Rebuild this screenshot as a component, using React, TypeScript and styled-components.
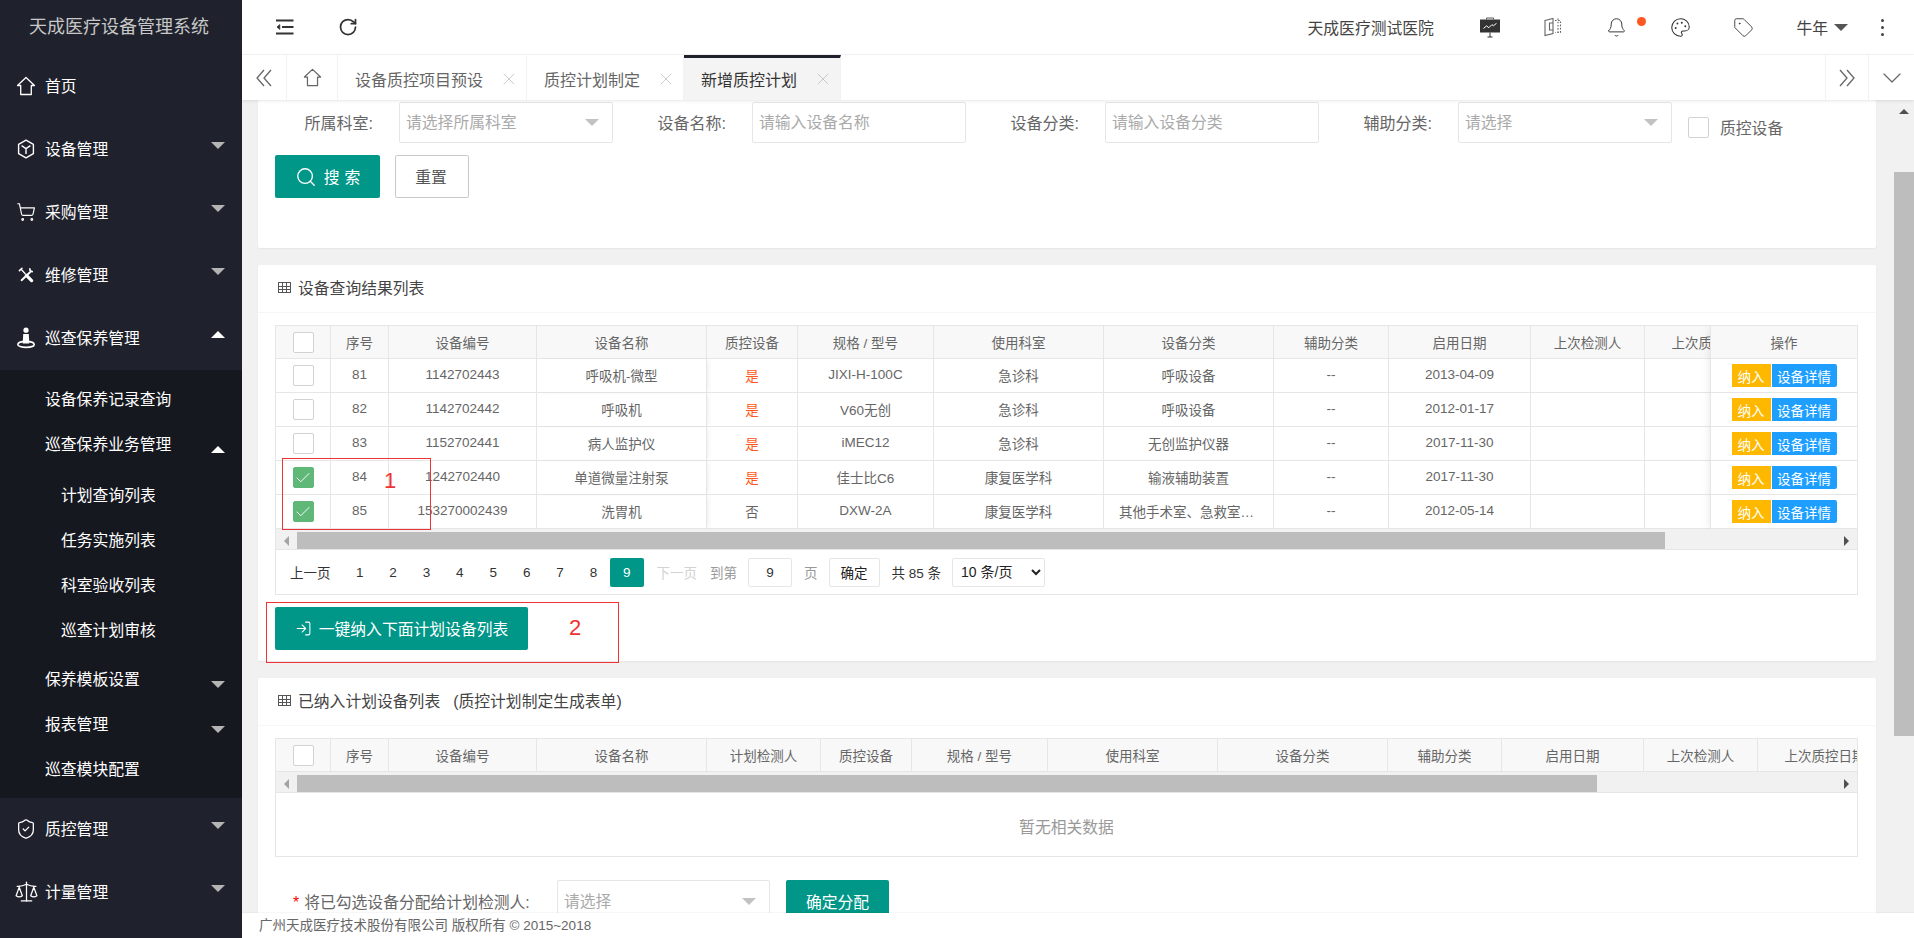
// Utils
import React from "react"
import styled, { createGlobalStyle } from "styled-components"
import {
	Bell,
	Check,
	ChevronDown,
	LogIn,
	Palette,
	RotateCw,
	Scale,
	Search,
	ShieldCheck,
	ShoppingCart,
	Tag,
	X,
} from "lucide-react"

const teal = "#009688"
const line = "#e6e6e6"

const HomeIcon = ({ size = 20 }: { size?: number }) => (
	<svg width={size} height={size} viewBox="0 0 20 20" fill="none" stroke="currentColor" strokeWidth="1.3">
		<path d="M1.5 9.5 10 1.5l8.5 8h-3.2v9H4.7v-9z" strokeLinejoin="round" />
	</svg>
)

const BoxIcon = () => (
	<svg width="20" height="20" viewBox="0 0 20 20" fill="none" stroke="currentColor" strokeWidth="1.4">
		<path d="M10 1.2 17.4 5.4v9.2L10 18.8 2.6 14.6V5.4z" strokeLinejoin="round" />
		<path d="M5.6 6.6 10 9.6l4.4-3M10 9.6v5.4" />
	</svg>
)

const ToolsIcon = () => (
	<svg width="16" height="16" viewBox="0 0 20 20" fill="none" stroke="currentColor" strokeLinecap="round">
		<path d="M4.5 3.5 9 8.5" strokeWidth="1.6" />
		<path d="M10.5 10.5 17 17" strokeWidth="4" />
		<path d="M15 6.5 4.5 16.5" strokeWidth="2.4" />
		<path d="M1.8 4.6 5 1.6" strokeWidth="2" />
		<path d="M14.8 2.4a3.4 3.4 0 0 0 3 3.4" strokeWidth="2" />
	</svg>
)

const PersonIcon = () => (
	<svg width="20" height="22" viewBox="0 0 20 22" fill="currentColor">
		<circle cx="10" cy="3.2" r="2.6" />
		<path d="M7.2 7h5.6l.5 9.4H6.7z" />
		<ellipse cx="10" cy="17.4" rx="8.2" ry="3" fill="none" stroke="currentColor" strokeWidth="1.6" />
	</svg>
)

const FoldIcon = () => (
	<svg width="18" height="16" viewBox="0 0 18 16" fill="none" stroke="#333" strokeWidth="1.8">
		<path d="M0 1.5h17.5M6 8h11.5M0 14.5h17.5" />
		<path d="M3.8 5.6 1 8l2.8 2.4z" fill="#333" strokeWidth="0.8" />
	</svg>
)

const BoardIcon = () => (
	<svg width="22" height="22" viewBox="0 0 22 22" fill="none">
		<rect x="1" y="3.5" width="20" height="13" fill="#333" />
		<path d="M7.5 3.5V2h7v1.5" stroke="#555" />
		<path d="M4.5 12.5l3-2.6 2.4 1.8 3-3 1.6 1 3-2.4" stroke="#fff" strokeWidth="1" />
		<path d="M11 16.5V21M8.5 21h5" stroke="#333" />
	</svg>
)

const BookIcon = () => (
	<svg width="18" height="20" viewBox="0 0 18 20" fill="none" stroke="#666" strokeWidth="1.1">
		<path d="M1 3.5 9 1.5v15l-8 2zM9 6h-3.5v7H9" />
		<path d="M11 3.5h5.5v12H11M14 1.5v16" strokeDasharray="1.6 1.6" />
	</svg>
)

const DoubleChevron = ({ right }: { right?: boolean }) => (
	<svg width="18" height="18" viewBox="0 0 18 18" fill="none" stroke="#666" strokeWidth="1.3">
		<path d={right ? "M2 1l7 8-7 8M9 1l7 8-7 8" : "M9 1 2 9l7 8M16 1 9 9l7 8"} />
	</svg>
)

interface RowData {
	no: number
	code: string
	name: string
	qc: boolean
	spec: string
	dept: string
	kind: string
	date: string
	checked: boolean
}

const rows: RowData[] = [
	{ no: 81, code: "1142702443", name: "呼吸机-微型", qc: true, spec: "JIXI-H-100C", dept: "急诊科", kind: "呼吸设备", date: "2013-04-09", checked: false },
	{ no: 82, code: "1142702442", name: "呼吸机", qc: true, spec: "V60无创", dept: "急诊科", kind: "呼吸设备", date: "2012-01-17", checked: false },
	{ no: 83, code: "1152702441", name: "病人监护仪", qc: true, spec: "iMEC12", dept: "急诊科", kind: "无创监护仪器", date: "2017-11-30", checked: false },
	{ no: 84, code: "1242702440", name: "单道微量注射泵", qc: true, spec: "佳士比C6", dept: "康复医学科", kind: "输液辅助装置", date: "2017-11-30", checked: true },
	{ no: 85, code: "153270002439", name: "洗胃机", qc: false, spec: "DXW-2A", dept: "康复医学科", kind: "其他手术室、急救室设备", date: "2012-05-14", checked: true },
]

const resultCols: [string, number][] = [
	["序号", 58],
	["设备编号", 148],
	["设备名称", 170],
	["质控设备", 91],
	["规格 / 型号", 136],
	["使用科室", 170],
	["设备分类", 170],
	["辅助分类", 115],
	["启用日期", 142],
	["上次检测人", 114],
	["上次质控日期", 135],
	["", 147],
]

const planCols: [string, number][] = [
	["序号", 58],
	["设备编号", 148],
	["设备名称", 170],
	["计划检测人", 114],
	["质控设备", 91],
	["规格 / 型号", 136],
	["使用科室", 170],
	["设备分类", 170],
	["辅助分类", 114],
	["启用日期", 142],
	["上次检测人", 114],
	["上次质控日期", 135],
]

const totalWidth = (cols: [string, number][]) =>
	cols.reduce((sum, [, width]) => sum + width, 55)

const HeadRow = ({ cols }: { cols: [string, number][] }) => (
	<>
		<colgroup>
			<col width={55} />
			{cols.map(([label, width]) => (
				<col key={label} width={width} />
			))}
		</colgroup>
		<thead>
			<tr>
				<Th>
					<CheckBox />
				</Th>
				{cols.map(([label]) => (
					<Th key={label}>{label}</Th>
				))}
			</tr>
		</thead>
	</>
)

const ScrollBar = ({ thumb }: { thumb: number }) => (
	<HScroll>
		<ScrollEnd>
			<SideArrow />
		</ScrollEnd>
		<HThumb $width={thumb} />
		<ScrollSpacer />
		<ScrollEnd>
			<SideArrow $right />
		</ScrollEnd>
	</HScroll>
)

const App: React.FC = () => {
	return (
		<Shell>
			<GlobalStyle />
			<Sidebar>
				<Logo>天成医疗设备管理系统</Logo>
				<NavItem>
					<NavIcon>
						<HomeIcon />
					</NavIcon>
					首页
				</NavItem>
				<NavItem>
					<NavIcon>
						<BoxIcon />
					</NavIcon>
					设备管理
					<Caret />
				</NavItem>
				<NavItem>
					<NavIcon>
						<ShoppingCart size={20} strokeWidth={1.4} />
					</NavIcon>
					采购管理
					<Caret />
				</NavItem>
				<NavItem>
					<NavIcon>
						<ToolsIcon />
					</NavIcon>
					维修管理
					<Caret />
				</NavItem>
				<NavItem>
					<NavIcon>
						<PersonIcon />
					</NavIcon>
					巡查保养管理
					<Caret $up />
				</NavItem>
				<SubNav>
					<SubItem>设备保养记录查询</SubItem>
					<SubItem>
						巡查保养业务管理
						<Caret $up $sub />
					</SubItem>
					<ThirdNav>
						<ThirdItem>计划查询列表</ThirdItem>
						<ThirdItem>任务实施列表</ThirdItem>
						<ThirdItem>科室验收列表</ThirdItem>
						<ThirdItem>巡查计划审核</ThirdItem>
					</ThirdNav>
					<SubItem>
						保养模板设置
						<Caret $sub />
					</SubItem>
					<SubItem>
						报表管理
						<Caret $sub />
					</SubItem>
					<SubItem>巡查模块配置</SubItem>
				</SubNav>
				<NavItem>
					<NavIcon>
						<ShieldCheck size={22} strokeWidth={1.4} />
					</NavIcon>
					质控管理
					<Caret />
				</NavItem>
				<NavItem>
					<NavIcon>
						<Scale size={25} strokeWidth={1.2} />
					</NavIcon>
					计量管理
					<Caret />
				</NavItem>
			</Sidebar>

			<Main>
				<TopBar>
					<TopTool>
						<FoldIcon />
					</TopTool>
					<TopTool>
						<RotateCw size={20} strokeWidth={2.1} color="#333" />
					</TopTool>
					<TopSpacer />
					<Hospital>天成医疗测试医院</Hospital>
					<TopIcons>
						<TopIcon>
							<BoardIcon />
						</TopIcon>
						<TopIcon>
							<BookIcon />
						</TopIcon>
						<TopIcon>
							<Bell size={21} strokeWidth={1.1} color="#333" />
							<Dot />
						</TopIcon>
						<TopIcon>
							<Palette size={21} strokeWidth={1.2} color="#333" />
						</TopIcon>
						<TopIcon>
							<Tag size={21} strokeWidth={1.1} color="#444" />
						</TopIcon>
					</TopIcons>
					<UserName>牛年</UserName>
					<UserCaret />
					<MoreDots>
						<i />
						<i />
						<i />
					</MoreDots>
				</TopBar>

				<TabBar>
					<TabEdge $width={45}>
						<DoubleChevron />
					</TabEdge>
					<TabEdge $width={51}>
						<HomeIcon size={19} />
					</TabEdge>
					<TabItem>
						设备质控项目预设
						<X size={20} strokeWidth={0.9} />
					</TabItem>
					<TabItem>
						质控计划制定
						<X size={20} strokeWidth={0.9} />
					</TabItem>
					<TabItem $active>
						新增质控计划
						<X size={20} strokeWidth={0.9} />
					</TabItem>
					<TabFill />
					<TabEdge $width={44}>
						<DoubleChevron right />
					</TabEdge>
					<TabEdge $width={45}>
						<ChevronDown size={32} strokeWidth={0.9} />
					</TabEdge>
				</TabBar>

				<Body>
					<Pane>
						<Card>
							<FormRow>
								<FormItem>
									<FieldLabel>所属科室:</FieldLabel>
									<Field>
										<FieldText>请选择所属科室</FieldText>
										<FieldCaret />
									</Field>
								</FormItem>
								<FormItem>
									<FieldLabel>设备名称:</FieldLabel>
									<Field>
										<FieldText>请输入设备名称</FieldText>
									</Field>
								</FormItem>
								<FormItem>
									<FieldLabel>设备分类:</FieldLabel>
									<Field>
										<FieldText>请输入设备分类</FieldText>
									</Field>
								</FormItem>
								<FormItem>
									<FieldLabel>辅助分类:</FieldLabel>
									<Field>
										<FieldText>请选择</FieldText>
										<FieldCaret />
									</Field>
								</FormItem>
								<QcCheck>
									<CheckBox />
									质控设备
								</QcCheck>
							</FormRow>
							<ButtonRow>
								<PrimaryButton $width={105}>
									<Search size={22} strokeWidth={1.5} />
									<Spaced>搜索</Spaced>
								</PrimaryButton>
								<GhostButton>重置</GhostButton>
							</ButtonRow>
						</Card>

						<Card>
							<CardTitle>
								<GridIcon />
								设备查询结果列表
							</CardTitle>
							<CardBody>
								<TableBox>
									<TableClip>
										<DataTable $width={totalWidth(resultCols)}>
											<HeadRow cols={resultCols} />
											<tbody>
												{rows.map((row) => (
													<tr key={row.no}>
														<Td>
															<CheckBox $checked={row.checked}>
																{row.checked && <Check size={18} strokeWidth={1.3} color="#fff" />}
															</CheckBox>
														</Td>
														<Td>{row.no}</Td>
														<Td>{row.code}</Td>
														<Td $pinned>{row.name}</Td>
														<Td $hot={row.qc}>{row.qc ? "是" : "否"}</Td>
														<Td>{row.spec}</Td>
														<Td>{row.dept}</Td>
														<Td>{row.kind}</Td>
														<Td>--</Td>
														<Td>{row.date}</Td>
														<Td />
														<Td />
														<Td />
													</tr>
												))}
											</tbody>
										</DataTable>
										<FixedColumn>
											<FixedHead>操作</FixedHead>
											{rows.map((row) => (
												<FixedCell key={row.no}>
													<MiniButton $color="#ffb800" $width={39}>
														纳入
													</MiniButton>
													<MiniButton $color="#1e9fff" $width={65}>
														设备详情
													</MiniButton>
												</FixedCell>
											))}
										</FixedColumn>
									</TableClip>
									<ScrollBar thumb={1368} />
								</TableBox>
								<Pager>
									<PagerLink>上一页</PagerLink>
									<PageNumbers>
										{[1, 2, 3, 4, 5, 6, 7, 8, 9].map((n) => (
											<PageNumber key={n} $active={n === 9}>
												{n}
											</PageNumber>
										))}
									</PageNumbers>
									<PagerText $gap={13} $muted>
										下一页
									</PagerText>
									<PagerText $gap={13} $dim>
										到第
									</PagerText>
									<PageInput>9</PageInput>
									<PagerText $gap={12} $dim>
										页
									</PagerText>
									<PageConfirm>确定</PageConfirm>
									<PagerText $gap={12}>共 85 条</PagerText>
									<PageSize defaultValue="10">
										<option value="10">10 条/页</option>
									</PageSize>
								</Pager>
								<PrimaryButton $width={253} $top={12}>
									<LogIn size={17} strokeWidth={1.5} />
									一键纳入下面计划设备列表
								</PrimaryButton>
							</CardBody>
							<Annotation $left={24} $top={193} $width={149} $height={72} />
							<AnnotationNumber $left={126} $top={203}>
								1
							</AnnotationNumber>
							<Annotation $left={8} $top={337} $width={353} $height={61} />
							<AnnotationNumber $left={311} $top={350}>
								2
							</AnnotationNumber>
						</Card>

						<Card>
							<CardTitle>
								<GridIcon />
								已纳入计划设备列表
								<TitleNote>(质控计划制定生成表单)</TitleNote>
							</CardTitle>
							<CardBody>
								<TableBox>
									<TableClip>
										<DataTable $width={totalWidth(planCols)}>
											<HeadRow cols={planCols} />
										</DataTable>
									</TableClip>
									<ScrollBar thumb={1300} />
									<EmptyRow>暂无相关数据</EmptyRow>
								</TableBox>
								<AssignRow>
									<AssignLabel>
										<Required>*</Required>将已勾选设备分配给计划检测人:
									</AssignLabel>
									<AssignField>
										<FieldText>请选择</FieldText>
										<FieldCaret />
									</AssignField>
									<PrimaryButton $width={103}>确定分配</PrimaryButton>
								</AssignRow>
							</CardBody>
						</Card>
					</Pane>
					<VScroll>
						<UpArrow />
						<VThumb />
					</VScroll>
				</Body>

				<Footer>广州天成医疗技术股份有限公司 版权所有 © 2015~2018</Footer>
			</Main>
		</Shell>
	)
}

export default App

const GlobalStyle = createGlobalStyle`
	html,
	body {
		margin: 0;
		height: 100%;
		overflow: hidden;
	}

	body {
		font-family: "Liberation Sans", "Noto Sans CJK SC", sans-serif;
		color: #666;
	}

	#root {
		height: 100%;
	}

	* {
		box-sizing: border-box;
	}
`

const Shell = styled.div`
	display: flex;
	height: 938px;
	width: 1914px;
	overflow: hidden;
`

const Sidebar = styled.aside`
	flex: 0 0 242px;
	background: #1f222c;
	color: #fff;
	font-size: 15.8px;
`

const Logo = styled.div`
	height: 55px;
	padding-right: 4px;
	line-height: 54px;
	text-align: center;
	font-size: 18px;
	color: #c8c8c8;
`

const NavItem = styled.div`
	display: flex;
	align-items: center;
	height: 63px;
	padding: 0 17px 2px 16px;
`

const NavIcon = styled.span`
	display: flex;
	justify-content: center;
	width: 20px;
	min-width: 0;
	margin-right: 9px;

	svg {
		flex-shrink: 0;
	}
`

const Caret = styled.span<{ $up?: boolean; $sub?: boolean }>`
	margin-left: auto;
	margin-top: ${(p) => (p.$sub ? "13px" : "-6px")};
	border-left: 7px solid transparent;
	border-right: 7px solid transparent;
	${(p) => (p.$up ? "border-bottom: 7px solid #fff;" : "border-top: 7px solid #b4b4b4;")}
`

const SubNav = styled.div`
	padding: 6px 0 7px;
	background: #16181f;
`

const SubItem = styled.div`
	display: flex;
	align-items: center;
	height: 45px;
	padding: 0 17px 1px 45px;
`

const ThirdNav = styled.div`
	padding: 6px 0 4px;
`

const ThirdItem = styled.div`
	display: flex;
	align-items: center;
	height: 45px;
	padding: 0 0 1px 61px;
`

const Main = styled.div`
	flex: 1;
	min-width: 0;
	display: flex;
	flex-direction: column;
`

const TopBar = styled.header`
	display: flex;
	align-items: center;
	flex: 0 0 55px;
	padding: 0 22px 0 34px;
	background: #fff;
	border-bottom: 1px solid #f4f4f4;
	color: #333;
`

const TopTool = styled.span`
	display: flex;
	margin-right: 44px;
`

const TopSpacer = styled.span`
	flex: 1;
`

const Hospital = styled.span`
	font-size: 15.8px;
	margin-right: 24px;
	color: #444;
`

const TopIcons = styled.div`
	display: flex;
`

const TopIcon = styled.span`
	position: relative;
	display: flex;
	align-items: center;
	justify-content: center;
	width: 63.5px;
`

const Dot = styled.span`
	position: absolute;
	left: 52px;
	top: 1px;
	width: 9px;
	height: 9px;
	border-radius: 50%;
	background: #ff5722;
`

const UserName = styled.span`
	font-size: 15.8px;
	margin-left: 21px;
	color: #444;
`

const UserCaret = styled.span`
	margin-left: 6px;
	border-left: 7px solid transparent;
	border-right: 7px solid transparent;
	border-top: 7px solid #555;
`

const MoreDots = styled.span`
	display: flex;
	flex-direction: column;
	align-items: center;
	gap: 4px;
	width: 20px;
	margin-left: 24px;

	i {
		width: 3px;
		height: 3px;
		border-radius: 50%;
		background: #444;
	}
`

const TabBar = styled.nav`
	position: relative;
	z-index: 2;
	display: flex;
	flex: 0 0 45px;
	background: #fff;
	box-shadow: 0 1px 3px rgba(0, 0, 0, 0.1);
	color: #666;
`

const TabEdge = styled.span<{ $width: number }>`
	display: flex;
	align-items: center;
	justify-content: center;
	width: ${(p) => p.$width}px;
	border-right: 1px solid #f2f2f2;
	color: #666;

	&:nth-last-child(2) {
		border-left: 1px solid #f2f2f2;
	}

	&:last-child {
		border-right: 0;
	}
`

const TabItem = styled.span<{ $active?: boolean }>`
	display: flex;
	align-items: center;
	gap: 16px;
	padding: 0 7px 0 17px;
	font-size: 16px;
	border-right: 1px solid #f2f2f2;
	border-top: 3px solid ${(p) => (p.$active ? "#1f222c" : "transparent")};
	background: ${(p) => (p.$active ? "#f4f4f4" : "#fff")};
	color: ${(p) => (p.$active ? "#333" : "#666")};

	svg {
		color: #bbb;
	}
`

const TabFill = styled.span`
	flex: 1;
`

const Body = styled.div`
	flex: 1;
	min-height: 0;
	display: flex;
	background: #f1f1f1;
`

const Pane = styled.div`
	flex: 1;
	min-width: 0;
	overflow: hidden;
	padding: 0 18px 0 16px;
`

const VScroll = styled.div`
	position: relative;
	flex: 0 0 20px;
`

const UpArrow = styled.span`
	display: block;
	width: 0;
	margin: 9px auto 0;
	border-left: 5px solid transparent;
	border-right: 5px solid transparent;
	border-bottom: 5px solid #505050;
`

const VThumb = styled.div`
	height: 564px;
	margin-top: 58px;
	background: #bdbdbd;
`

const Card = styled.section`
	position: relative;
	margin-bottom: 17px;
	background: #fff;
	border-radius: 2px;
	box-shadow: 0 1px 2px rgba(0, 0, 0, 0.05);
`

const FormRow = styled.div`
	display: flex;
	padding: 2px 0 0 2px;
`

const FormItem = styled.div`
	display: flex;
	align-items: center;
	width: 353px;
`

const FieldLabel = styled.label`
	flex: 0 0 113px;
	margin-right: 26px;
	padding-bottom: 2px;
	text-align: right;
	font-size: 16px;
	color: #666;
`

const Field = styled.div`
	display: flex;
	align-items: center;
	justify-content: space-between;
	width: 214px;
	height: 41px;
	padding: 0 13px 0 6px;
	border: 1px solid ${line};
	border-radius: 2px;
	font-size: 15.8px;
	color: #aaa;
`

const FieldText = styled.span`
	margin-bottom: 2px;
`

const FieldCaret = styled.span`
	border-left: 7px solid transparent;
	border-right: 7px solid transparent;
	border-top: 7px solid #c2c2c2;
`

const QcCheck = styled.label`
	display: flex;
	align-items: center;
	gap: 11px;
	margin: 15px 0 0 16px;
	height: 21px;
	font-size: 15.8px;
	color: #666;
`

const CheckBox = styled.span<{ $checked?: boolean }>`
	display: inline-flex;
	align-items: center;
	justify-content: center;
	vertical-align: middle;
	width: 21px;
	height: 21px;
	border: 1px solid ${(p) => (p.$checked ? "#5fb878" : "#d2d2d2")};
	border-radius: 2px;
	background: ${(p) => (p.$checked ? "#5fb878" : "#fff")};
`

const ButtonRow = styled.div`
	display: flex;
	gap: 15px;
	padding: 12px 0 50px 17px;
`

const PrimaryButton = styled.button<{ $width: number; $top?: number }>`
	display: flex;
	align-items: center;
	justify-content: center;
	gap: 7px;
	width: ${(p) => p.$width}px;
	height: 43px;
	margin-top: ${(p) => p.$top || 0}px;
	padding: 0;
	border: 0;
	border-radius: 2px;
	background: ${teal};
	color: #fff;
	font: inherit;
	font-size: 15.8px;
`

const Spaced = styled.span`
	letter-spacing: 5px;
	margin-right: -5px;
`

const GhostButton = styled.button`
	width: 74px;
	height: 43px;
	padding: 0 2px 0 0;
	border: 1px solid #c9c9c9;
	border-radius: 2px;
	background: #fff;
	color: #555;
	font: inherit;
	font-size: 15.8px;
`

const CardTitle = styled.h3`
	display: flex;
	align-items: center;
	height: 48px;
	margin: 0;
	padding: 0 0 2px 20px;
	border-bottom: 1px solid #f6f6f6;
	font-size: 15.8px;
	font-weight: 400;
	color: #444;
`

const GridIcon = styled.span`
	width: 13px;
	height: 11px;
	margin-right: 7px;
	border: 1px solid #555;
	background:
		linear-gradient(#555, #555) 0 3px / 100% 1px no-repeat,
		linear-gradient(#555, #555) 0 6px / 100% 1px no-repeat,
		linear-gradient(#555, #555) 3px 0 / 1px 100% no-repeat,
		linear-gradient(#555, #555) 7px 0 / 1px 100% no-repeat;
`

const TitleNote = styled.span`
	margin-left: 13px;
`

const CardBody = styled.div`
	padding: 12px 18px 11px 17px;
`

const TableBox = styled.div`
	border: 1px solid ${line};
	border-bottom: 0;
`

const TableClip = styled.div`
	position: relative;
	overflow: hidden;
`

const DataTable = styled.table<{ $width: number }>`
	table-layout: fixed;
	border-collapse: separate;
	border-spacing: 0;
	width: ${(p) => p.$width}px;
	font-size: 13.5px;
	color: #666;
`

const Th = styled.th`
	height: 33px;
	padding: 0;
	background: #f8f8f8;
	border-right: 1px solid ${line};
	border-bottom: 1px solid ${line};
	font-weight: 400;
	white-space: nowrap;
	overflow: hidden;
`

const Td = styled.td<{ $hot?: boolean; $pinned?: boolean }>`
	position: relative;
	height: 34px;
	padding: 0 15px 2px;
	border-right: 1px solid ${line};
	border-bottom: 1px solid ${line};
	text-align: center;
	white-space: nowrap;
	overflow: hidden;
	text-overflow: ellipsis;
	color: ${(p) => (p.$hot ? "#ff5722" : "#666")};

	&:first-child {
		padding: 0;
	}

	${(p) => p.$pinned && "box-shadow: 3px 0 5px -2px rgba(0, 0, 0, 0.08); z-index: 1;"}
`

const FixedColumn = styled.div`
	position: absolute;
	top: 0;
	right: 0;
	z-index: 2;
	width: 147px;
	border-left: 1px solid ${line};
	background: #fff;
	box-shadow: -1px 0 8px rgba(0, 0, 0, 0.08);
	font-size: 13.5px;
`

const FixedHead = styled.div`
	display: flex;
	align-items: center;
	justify-content: center;
	height: 33px;
	background: #f8f8f8;
	border-bottom: 1px solid ${line};
`

const FixedCell = styled.div`
	display: flex;
	align-items: flex-start;
	justify-content: center;
	height: 34px;
	padding-top: 5px;
	border-bottom: 1px solid ${line};
`

const MiniButton = styled.span<{ $color: string; $width: number }>`
	display: flex;
	align-items: center;
	justify-content: center;
	width: ${(p) => p.$width}px;
	height: 23px;
	margin-right: 1px;
	background: ${(p) => p.$color};
	color: #fff;
	font-size: 13.5px;

	&:last-child {
		margin-right: 0;
		border-radius: 0 2px 2px 0;
	}
`

const HScroll = styled.div`
	display: flex;
	height: 21px;
	padding-top: 3px;
	background: #f1f1f1;
	border-bottom: 1px solid ${line};
`

const ScrollEnd = styled.span`
	display: flex;
	align-items: center;
	justify-content: center;
	flex: 0 0 21px;
`

const SideArrow = styled.span<{ $right?: boolean }>`
	border-top: 5px solid transparent;
	border-bottom: 5px solid transparent;
	${(p) => (p.$right ? "border-left: 5px solid #505050;" : "border-right: 5px solid #a3a3a3;")}
`

const HThumb = styled.span<{ $width: number }>`
	flex: 0 0 ${(p) => p.$width}px;
	background: #bdbdbd;
`

const ScrollSpacer = styled.span`
	flex: 1;
`

const Pager = styled.div`
	display: flex;
	align-items: center;
	height: 45px;
	padding-left: 14px;
	border: 1px solid ${line};
	border-top: 0;
	font-size: 13.5px;
	color: #333;
`

const PagerLink = styled.span`
	width: 41px;
	white-space: nowrap;
`

const PageNumbers = styled.div`
	display: flex;
	margin-left: 12px;
`

const PageNumber = styled.span<{ $active?: boolean }>`
	display: flex;
	align-items: center;
	justify-content: center;
	width: 33.4px;
	height: 29px;
	border-radius: 2px;
	background: ${(p) => (p.$active ? teal : "transparent")};
	color: ${(p) => (p.$active ? "#fff" : "#333")};
`

const PagerText = styled.span<{ $gap: number; $muted?: boolean; $dim?: boolean }>`
	margin-left: ${(p) => p.$gap}px;
	color: ${(p) => (p.$muted ? "#d2d2d2" : p.$dim ? "#999" : "#333")};
`

const PageInput = styled.span`
	display: flex;
	align-items: center;
	justify-content: center;
	width: 44px;
	height: 29px;
	margin-left: 11px;
	border: 1px solid ${line};
	border-radius: 2px;
	color: #333;
`

const PageConfirm = styled.button`
	width: 51px;
	height: 29px;
	margin-left: 11px;
	padding: 0;
	border: 1px solid ${line};
	border-radius: 2px;
	background: #fff;
	color: #222;
	font: inherit;
`

const PageSize = styled.select`
	width: 93px;
	height: 29px;
	margin-left: 11px;
	padding-left: 4px;
	border: 1px solid ${line};
	border-radius: 2px;
	background: #fff;
	color: #222;
	font: inherit;
	font-size: 14px;
`

const Annotation = styled.div<{ $left: number; $top: number; $width: number; $height: number }>`
	position: absolute;
	z-index: 3;
	left: ${(p) => p.$left}px;
	top: ${(p) => p.$top}px;
	width: ${(p) => p.$width}px;
	height: ${(p) => p.$height}px;
	border: 1px solid #ee3333;
	pointer-events: none;
`

const AnnotationNumber = styled.span<{ $left: number; $top: number }>`
	position: absolute;
	z-index: 3;
	left: ${(p) => p.$left}px;
	top: ${(p) => p.$top}px;
	font-size: 22px;
	line-height: 26px;
	color: #ee3333;
`

const EmptyRow = styled.div`
	display: flex;
	align-items: center;
	justify-content: center;
	height: 64px;
	padding-top: 3px;
	border-bottom: 1px solid ${line};
	font-size: 15.8px;
	color: #999;
`

const AssignRow = styled.div`
	display: flex;
	align-items: center;
	padding: 23px 0 0 18px;
`

const AssignLabel = styled.label`
	width: 264px;
	font-size: 15.8px;
	color: #666;
	white-space: nowrap;
`

const Required = styled.span`
	margin-right: 5px;
	color: #f00;
`

const AssignField = styled(Field)`
	width: 213px;
	height: 43px;
	margin-right: 16px;
`

const Footer = styled.footer`
	flex: 0 0 25px;
	padding-left: 17px;
	line-height: 25px;
	background: #fff;
	font-size: 13.5px;
	color: #666;
	position: relative;
	z-index: 2;
	box-shadow: 0 -1px 1px rgba(0, 0, 0, 0.03);
`
